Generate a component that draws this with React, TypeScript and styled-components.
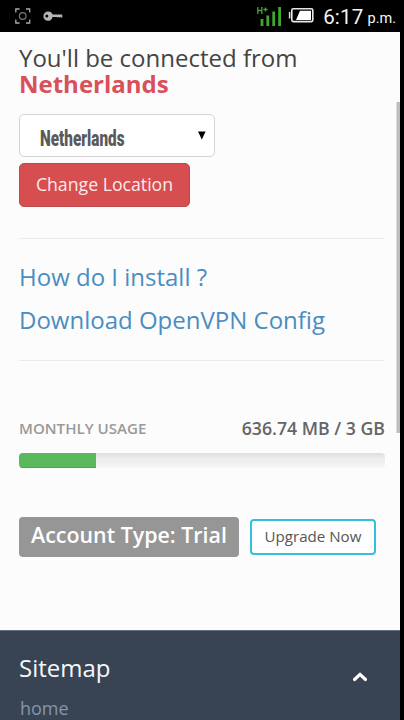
import React from "react";
import styled, { createGlobalStyle } from "styled-components";

const Global = createGlobalStyle`
  * { box-sizing: border-box; }
  html, body { margin: 0; background: #000; }
  body { font-family: "Open Sans", "Noto Sans", sans-serif; overflow: hidden; }
`;

const Screen = styled.div`
  width: 404px;
  height: 720px;
  overflow: hidden;
  display: flex;
  flex-direction: column;
  background: #000;
`;

const StatusBar = styled.header`
  flex: none;
  height: 32px;
  padding-right: 8px;
  display: flex;
  align-items: flex-start;
  justify-content: space-between;
  color: #f4f4f4;
`;

const StatusText = styled.span<{ $size: number; $top: number; $gap: number; $track: number }>`
  font-family: Roboto, sans-serif;
  font-size: ${(p) => p.$size}px;
  line-height: 24px;
  margin: ${(p) => p.$top}px 0 0 ${(p) => p.$gap}px;
  letter-spacing: ${(p) => p.$track}px;
  white-space: nowrap;
`;

const StatusGroup = styled.div`
  display: flex;
  height: 32px;
`;

const Viewport = styled.div`
  position: relative;
  width: 400px;
  height: 688px;
  background: #fcfcfc;
  display: flex;
  flex-direction: column;
`;

const ScrollThumb = styled.div`
  position: absolute;
  top: 70px;
  right: 0;
  width: 4px;
  height: 331px;
  background: #bdbdbd;
  border-left: 1px solid #dedede;
`;

const Content = styled.main`
  height: 598px;
  padding: 13px 15px 0 19px;
  display: flex;
  flex-direction: column;
  align-items: flex-start;
`;

const Heading = styled.h1`
  margin: 0;
  height: 69px;
  font-size: 24px;
  line-height: 26px;
  font-weight: 400;
  color: #444;
  white-space: nowrap;
`;

const Country = styled.strong`
  display: block;
  font-weight: 700;
  color: #d9505a;
`;

const Select = styled.div`
  width: 196px;
  height: 43px;
  padding: 0 8px 0 20px;
  display: flex;
  align-items: center;
  justify-content: space-between;
  background: #fff;
  border: 1px solid #d4d4d4;
  border-radius: 5px;
`;

const SelectValue = styled.span`
  width: 90px;
  font-family: Roboto, sans-serif;
  font-weight: 900;
  font-size: 22.5px;
  line-height: 30px;
  margin-top: 5px;
  color: #5a5a5a;
  white-space: nowrap;
  transform: scaleX(0.68);
  transform-origin: left center;
`;

const DangerButton = styled.button`
  width: 171px;
  height: 44px;
  margin-top: 6px;
  padding: 0 0 2px;
  font: 400 17.7px/26px "Open Sans", sans-serif;
  color: #fbeaea;
  background: #d64e50;
  border: 1px solid #b94a4e;
  border-radius: 5px;
  white-space: nowrap;
`;

const Divider = styled.hr<{ $top: number }>`
  width: 365px;
  height: 1px;
  margin: ${(p) => p.$top}px 0 0;
  border: 0;
  background: #ebebeb;
`;

const Links = styled.nav`
  height: 86px;
  margin-top: 16px;
  display: flex;
  flex-direction: column;
`;

const TextLink = styled.a`
  height: 43px;
  font-size: 24px;
  line-height: 43px;
  color: #4b8dc1;
  white-space: nowrap;
`;

const UsageRow = styled.div`
  width: 366px;
  height: 24px;
  margin-top: 55px;
  display: flex;
  align-items: center;
  justify-content: space-between;
  white-space: nowrap;
`;

const UsageLabel = styled.span`
  font-size: 15.1px;
  font-weight: 600;
  color: #999;
`;

const UsageValue = styled.span`
  font-size: 17.7px;
  font-weight: 600;
  color: #666;
`;

const Progress = styled.div`
  width: 366px;
  height: 15px;
  margin-top: 13px;
  overflow: hidden;
  border-radius: 4px;
  background: linear-gradient(#dfdfdf, #ececec 35%, #f6f6f6);
`;

const ProgressFill = styled.div`
  height: 100%;
  background: #5cb85c;
  box-shadow: inset 0 -1px 0 #55a155;
`;

const AccountRow = styled.div`
  margin-top: 49px;
  display: flex;
  align-items: flex-start;
  gap: 11px;
`;

const AccountTag = styled.span`
  width: 220px;
  height: 40px;
  padding-bottom: 5px;
  display: flex;
  align-items: center;
  justify-content: center;
  font-size: 21.4px;
  font-weight: 600;
  color: #fff;
  background: #969696;
  border-radius: 4px;
  white-space: nowrap;
`;

const UpgradeButton = styled.button`
  width: 126px;
  height: 36px;
  margin-top: 2px;
  padding: 0 0 2px;
  font: 400 15.1px/22px "Open Sans", sans-serif;
  color: #555;
  background: #fff;
  border: 2px solid #35bfdc;
  border-radius: 4px;
  white-space: nowrap;
`;

const Footer = styled.footer`
  flex: 1;
  padding: 21px 31px 0 19px;
  display: flex;
  justify-content: space-between;
  background: #384454;
  border-top: 1px solid #66717a;
`;

const FooterTitle = styled.h2`
  margin: 0;
  font-size: 24px;
  line-height: 32px;
  font-weight: 400;
  color: #f4f8fc;
`;

const FooterLink = styled.a`
  display: block;
  margin: 12px 0 0 1px;
  font-size: 18px;
  line-height: 24px;
  color: #8496a8;
`;

const ChevronSlot = styled.div`
  padding-top: 15px;
`;

export default function App() {
  const used = 77 / 366;
  return (
    <Screen>
      <Global />
      <StatusBar>
        <StatusGroup>
          <svg width="70" height="32" viewBox="0 0 70 32" fill="none">
            <path d="M15.8 12.5V9H19.5M26 9h3.7v3.5M29.7 19.5V23H26M19.5 23h-3.7v-3.5" stroke="#aaa" strokeWidth="1.3" />
            <circle cx="22.7" cy="16" r="3.3" stroke="#777" strokeWidth="1.2" />
            <path fillRule="evenodd" d="M48.3 11.6a4.6 4.6 0 0 1 4.3 3H61.5a.8.8 0 0 1 .8.8v2h-1.6v-.6l-1 .7-1-.6-1 .7-1-.6h-4.2a4.6 4.6 0 1 1-4.2-5.4ZM46.8 14.6a1.5 1.5 0 1 0 0 3 1.5 1.5 0 0 0 0-3Z" fill="#b5b5b5" />
          </svg>
        </StatusGroup>
        <StatusGroup>
          <svg width="60" height="32" viewBox="254 0 60 32" fill="none">
            <path d="M257.8 7v7M261.8 7v7M257.8 10.5h4M263.4 9.5h4.2M265.5 7.5v4" stroke="#3fa62e" strokeWidth="1.3" />
            <path d="M262 19v7M267.8 15.5V26M273.7 11.5V26M279.6 7V26" stroke="#3fa62e" strokeWidth="2.8" />
            <path d="M289.6 12v6.5" stroke="#ddd" strokeWidth="1.5" />
            <rect x="291.8" y="8.8" width="21" height="12.8" rx="1.5" stroke="#e8e8e8" strokeWidth="1.6" />
            <path d="M300 10.8h11v9.2h-15Z" fill="#fff" />
          </svg>
          <StatusText $size={20.5} $top={5} $gap={9} $track={0.2}>6:17</StatusText>
          <StatusText $size={14.5} $top={7} $gap={4} $track={0}>p.m.</StatusText>
        </StatusGroup>
      </StatusBar>
      <Viewport>
        <Content>
          <Heading>
            You'll be connected from
            <Country>Netherlands</Country>
          </Heading>
          <Select>
            <SelectValue>Netherlands</SelectValue>
            <svg width="8" height="9" viewBox="0 0 8 9"><path d="M0 0.5h7.6L3.8 8.5Z" fill="#000" /></svg>
          </Select>
          <DangerButton>Change Location</DangerButton>
          <Divider $top={31} />
          <Links>
            <TextLink>How do I install ?</TextLink>
            <TextLink>Download OpenVPN Config</TextLink>
          </Links>
          <Divider $top={19} />
          <UsageRow>
            <UsageLabel>MONTHLY USAGE</UsageLabel>
            <UsageValue>636.74 MB / 3 GB</UsageValue>
          </UsageRow>
          <Progress>
            <ProgressFill style={{ width: `${used * 100}%` }} />
          </Progress>
          <AccountRow>
            <AccountTag>Account Type: Trial</AccountTag>
            <UpgradeButton>Upgrade Now</UpgradeButton>
          </AccountRow>
        </Content>
        <Footer>
          <div>
            <FooterTitle>Sitemap</FooterTitle>
            <FooterLink>home</FooterLink>
          </div>
          <ChevronSlot>
            <svg width="18" height="14" viewBox="0 0 18 14" fill="none">
              <path d="M3.5 9.5 9 4.3l5.5 5.2" stroke="#fff" strokeWidth="3.2" strokeLinecap="round" strokeLinejoin="round" />
            </svg>
          </ChevronSlot>
        </Footer>
        <ScrollThumb />
      </Viewport>
    </Screen>
  );
}
